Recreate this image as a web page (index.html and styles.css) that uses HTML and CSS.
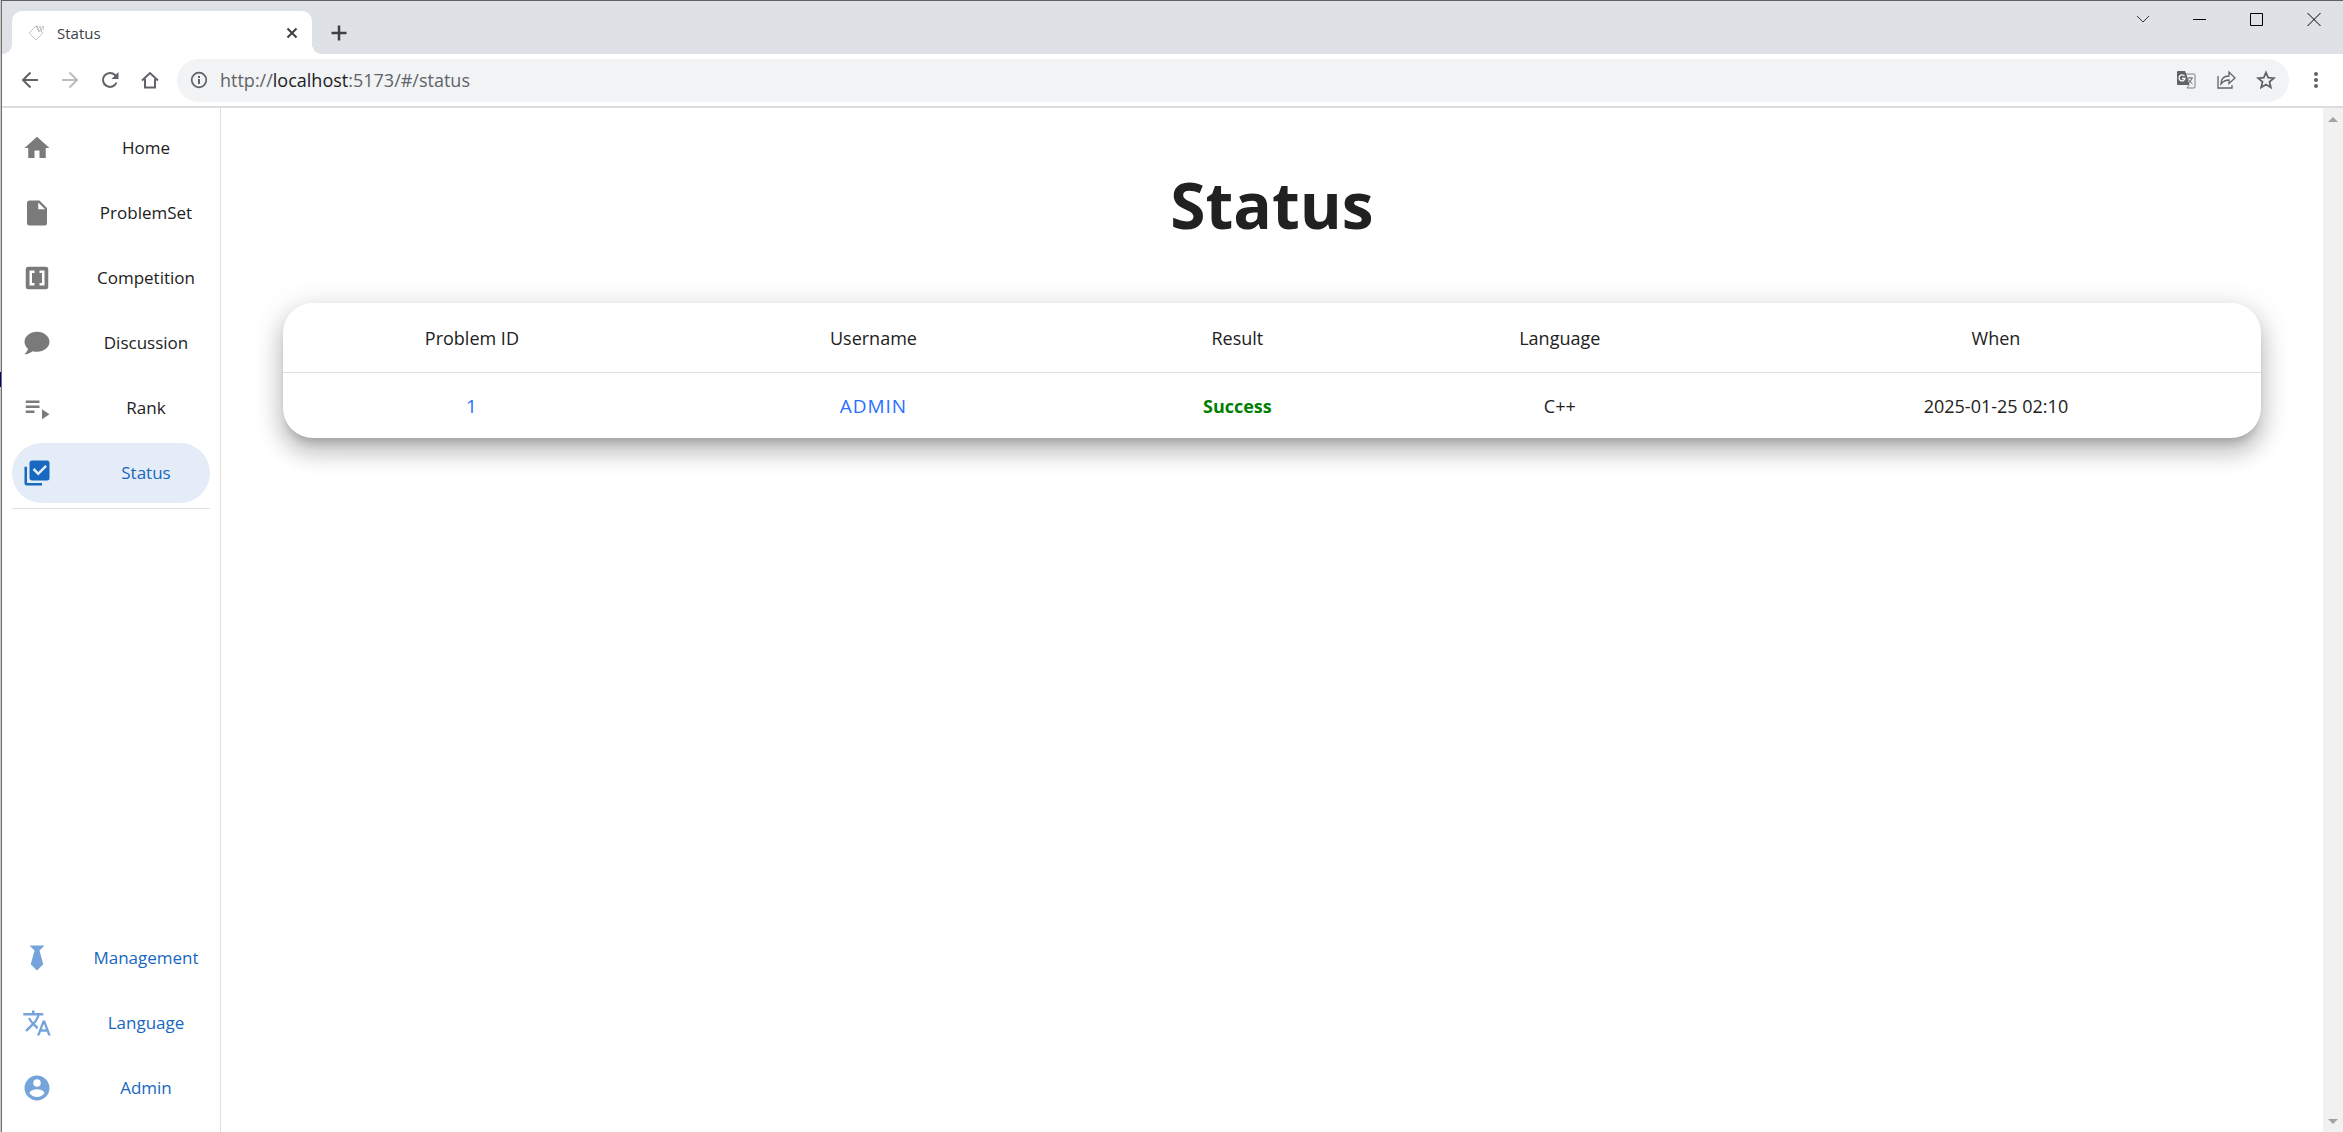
FILE: index.html
```html
<!DOCTYPE html>
<html lang="en">
<head>
<meta charset="utf-8">
<title>Status</title>
<link rel="stylesheet" href="styles.css">
</head>
<body>
<div class="window">
  <header class="tabstrip">
    <div class="tab">
      <svg class="favicon" viewBox="0 0 18 18"><path d="M8 2 1 9l7 7 7-7-3-3M8 2l2 1" fill="none" stroke="#c4c4c4"/><path d="M8 3h9M9 5h7M10 7h4" stroke="#999" stroke-dasharray="2 1" fill="none"/></svg>
      <span class="tab-title">Status</span>
      <button class="tab-close" aria-label="Close tab"><svg viewBox="0 0 12 12"><path d="m1.500 1.500 9 9M10.500 1.500l-9 9" fill="none" stroke="#3c4043" stroke-width="2"/></svg></button>
    </div>
    <button class="new-tab" aria-label="New tab"><svg viewBox="0 0 16 16"><path d="M8 .5v15M.5 8h15" fill="none" stroke="#3c4043" stroke-width="2.500"/></svg></button>
    <div class="window-controls">
      <button aria-label="Search tabs"><svg viewBox="0 0 14 14"><path d="m1 4 6 6 6-6" fill="none" stroke="#333"/></svg></button>
      <button aria-label="Minimize"><svg viewBox="0 0 14 14"><path d="M0 7.500h13" fill="none" stroke="#000"/></svg></button>
      <button aria-label="Maximize"><svg viewBox="0 0 14 14"><path d="M.5 1.500h12v12H.5z" fill="none" stroke="#000"/></svg></button>
      <button aria-label="Close"><svg viewBox="0 0 14 14"><path d="m.5 1 13 13M13.500 1l-13 13" fill="none" stroke="#000"/></svg></button>
    </div>
  </header>

  <div class="toolbar">
    <button class="tool" aria-label="Back"><svg viewBox="0 0 20 20"><path d="M18 10H3m7.500-7.500L3 10l7.500 7.500" fill="none" stroke="#5f6368" stroke-width="2"/></svg></button>
    <button class="tool" aria-label="Forward"><svg viewBox="0 0 20 20"><path d="M2 10h15M9.500 2.500 17 10l-7.500 7.500" fill="none" stroke="#babcbe" stroke-width="2"/></svg></button>
    <button class="tool" aria-label="Reload"><svg viewBox="0 0 20 20"><path d="M16.500 12.500A7 7 0 1 1 15 5l2 2" fill="none" stroke="#5f6368" stroke-width="2"/><path d="M18.500 2v7h-7z" fill="#5f6368"/></svg></button>
    <button class="tool" aria-label="Home page"><svg viewBox="0 0 20 20"><path d="M2 10.500 10 3l8 7.500M5 9v8.500h10V9" fill="none" stroke="#5f6368" stroke-width="2"/></svg></button>
    <div class="address">
      <svg class="info" viewBox="0 0 18 18"><circle cx="9" cy="9" r="7.300" fill="none" stroke="#5f6368" stroke-width="1.700"/><path d="M9 8v5M9 5v2" stroke="#5f6368" stroke-width="2"/></svg>
      <a class="url" href="#/status">http://<span class="host">localhost</span>:5173/#/status</a>
      <button class="tool" aria-label="Translate"><svg viewBox="0 0 20 20"><path d="M2 1h7l1.500 3.500 3 10.500H2a1 1 0 0 1-1-1V2a1 1 0 0 1 1-1z" fill="#5f6368"/><path d="M10.500 4H18q1 0 1 1v12q0 1-1 1h-7l2-3" fill="none" stroke="#7d8084"/><path d="M8.500 6.200A3 3 0 1 0 9 8.500H6" fill="none" stroke="#fff" stroke-width="1.300"/><path d="M11.500 8H17M14 7v1m2 0q-1 4-4 5.500M12.500 9.500q1 2 4 4.500" fill="none" stroke="#5f6368"/></svg></button>
      <button class="tool" aria-label="Share"><svg viewBox="0 0 20 20"><path d="M2 6v12h14v-3" fill="none" stroke="#5f6368" stroke-width="1.300"/><path d="M5 14q0-8 8-8V2l6 6-6 5.500V10q-5 0-8 4z" fill="none" stroke="#5f6368" stroke-width="1.300"/></svg></button>
      <button class="tool" aria-label="Bookmark"><svg viewBox="0 0 20 20"><path d="m10 2.500 2.200 5.200 5.600.5-4.300 3.700 1.300 5.500-4.800-2.900-4.800 2.900 1.300-5.500L2.200 8.200l5.600-.5z" fill="none" stroke="#5f6368" stroke-width="1.800"/></svg></button>
    </div>
    <button class="tool menu" aria-label="Menu"><svg viewBox="0 0 20 20"><g fill="#5f6368"><circle cx="10" cy="4" r="2"/><circle cx="10" cy="10" r="2"/><circle cx="10" cy="16" r="2"/></g></svg></button>
  </div>

  <div class="page">
    <nav class="sidebar">
      <div class="nav-group nav-top">
        <a class="nav-item" href="#/"><svg viewBox="0 0 24 24"><path d="M10,20V14H14V20H19V12H22L12,3L2,12H5V20H10Z"/></svg><span>Home</span></a>
        <a class="nav-item" href="#/problems"><svg viewBox="0 0 24 24"><path d="M13,9V3.500L18.500,9M6,2C4.890,2 4,2.890 4,4V20A2,2 0 0,0 6,22H18A2,2 0 0,0 20,20V8L14,2H6Z"/></svg><span>ProblemSet</span></a>
        <a class="nav-item" href="#/competition"><svg viewBox="0 0 24 24"><path d="M3,5A2,2 0 0,1 5,3H19A2,2 0 0,1 21,5V19A2,2 0 0,1 19,21H5A2,2 0 0,1 3,19V5M6,6V18H10V16H8V8H10V6H6M16,16H14V18H18V6H14V8H16V16Z"/></svg><span>Competition</span></a>
        <a class="nav-item" href="#/discussion"><svg viewBox="0 0 24 24"><path d="M12,3C17.500,3 22,6.580 22,11C22,15.420 17.500,19 12,19C10.760,19 9.570,18.820 8.470,18.500C5.550,21 2,21 2,21C4.330,18.670 4.700,17.100 4.750,16.500C3.050,15.070 2,13.130 2,11C2,6.580 6.500,3 12,3Z"/></svg><span>Discussion</span></a>
        <a class="nav-item" href="#/rank"><svg viewBox="0 0 24 24"><path d="M3,10H14V12H3V10M3,6H14V8H3V6M3,14H10V16H3V14M16,13V21L22,17L16,13Z"/></svg><span>Rank</span></a>
        <a class="nav-item active" href="#/status"><svg viewBox="0 0 24 24"><path d="M22,16A2,2 0 0,1 20,18H8C6.890,18 6,17.100 6,16V4C6,2.890 6.890,2 8,2H20A2,2 0 0,1 22,4V16M16,20V22H4A2,2 0 0,1 2,20V7H4V20H16M13,14L20,7L18.590,5.590L13,11.170L9.910,8.090L8.500,9.500L13,14Z"/></svg><span>Status</span></a>
      </div>
      <div class="nav-group nav-bottom">
        <a class="nav-item" href="#/management"><svg viewBox="0 0 24 24"><path d="M6,2L10,6L7,17L12,22L17,17L14,6L18,2Z"/></svg><span>Management</span></a>
        <a class="nav-item" href="#/language"><svg viewBox="0 0 24 24"><path d="M12.870,15.070L10.330,12.560L10.360,12.530C12.100,10.590 13.340,8.360 14.070,6H17V4H10V2H8V4H1V6H12.170C11.500,7.920 10.440,9.750 9,11.350C8.070,10.320 7.300,9.190 6.690,8H4.690C5.420,9.630 6.420,11.170 7.670,12.560L2.580,17.580L4,19L9,14L12.110,17.110L12.870,15.070M18.500,10H16.500L12,22H14L15.120,19H19.870L21,22H23L18.500,10M15.880,17L17.500,12.670L19.120,17H15.880Z"/></svg><span>Language</span></a>
        <a class="nav-item" href="#/admin"><svg viewBox="0 0 24 24"><path d="M12,19.200C9.500,19.200 7.290,17.920 6,16C6.030,14 10,12.900 12,12.900C14,12.900 17.970,14 18,16C16.710,17.920 14.500,19.200 12,19.200M12,5A3,3 0 0,1 15,8A3,3 0 0,1 12,11A3,3 0 0,1 9,8A3,3 0 0,1 12,5M12,2A10,10 0 0,0 2,12A10,10 0 0,0 12,22A10,10 0 0,0 22,12C22,6.470 17.500,2 12,2Z"/></svg><span>Admin</span></a>
      </div>
    </nav>

    <main class="content">
      <h1>Status</h1>
      <div class="card">
        <table>
          <colgroup><col class="c-id"><col class="c-user"><col class="c-result"><col class="c-lang"><col class="c-when"></colgroup>
          <thead><tr><th>Problem ID</th><th>Username</th><th>Result</th><th>Language</th><th>When</th></tr></thead>
          <tbody><tr><td><a href="#/problem/1">1</a></td><td><a href="#/user/admin">ADMIN</a></td><td class="success">Success</td><td>C++</td><td>2025-01-25 02:10</td></tr></tbody>
        </table>
      </div>
    </main>

    <div class="scrollbar"><i class="arrow up"></i><i class="arrow down"></i></div>
  </div>
</div>
</body>
</html>
```
FILE: styles.css
```css
* { box-sizing: border-box; }

/* The desktop shows as a thin strip left of the window */
body {
  margin: 0;
  padding-left: 1px;
  background: linear-gradient(#c8c8c8 372px, #000080 372px, #000080 387px, #c8c8c8 387px);
  color: #212121;
  font-family: "Open Sans", "Noto Sans", sans-serif;
}

a { color: inherit; text-decoration: none; }

button {
  display: flex;
  align-items: center;
  justify-content: center;
  padding: 0;
  border: 0;
  background: none;
}

svg { display: block; flex: none; }

.window {
  display: flex;
  flex-direction: column;
  min-height: 100vh;
  border-top: 1px solid #606266;
  border-left: 1px solid #707070;
  background: #fff;
}

/* Browser frame */
.tabstrip {
  display: flex;
  align-items: flex-end;
  height: 53px;
  padding-left: 10px;
  background: #dee1e6;
}

.tab {
  position: relative;
  display: flex;
  align-items: center;
  width: 300px;
  height: 43px;
  padding: 0 14px 0 16px;
  border-radius: 10px 10px 0 0;
  background: #fff;
}

.tab::before,
.tab::after {
  content: "";
  position: absolute;
  bottom: 0;
  width: 10px;
  height: 10px;
}

.tab::before { right: 100%; background: radial-gradient(circle at 0 0, #dee1e6 10px, #fff 10px); }
.tab::after { left: 100%; background: radial-gradient(circle at 100% 0, #dee1e6 10px, #fff 10px); }

.favicon { width: 18px; height: 18px; }
.tab-title { flex: 1; margin-left: 11px; color: #3c4043; font-size: 15px; }
.tab-close svg { width: 12px; height: 12px; }
.new-tab { width: 54px; height: 43px; }
.new-tab svg { width: 16px; height: 16px; }

.window-controls { display: flex; align-self: flex-start; margin-left: auto; padding-right: 1px; }
.window-controls button { width: 57px; height: 36px; }
.window-controls svg { width: 14px; height: 14px; }

.toolbar {
  display: flex;
  align-items: center;
  height: 54px;
  padding: 0 7px 0 8px;
  border-bottom: 2px solid #dadcde;
}

.tool { width: 40px; height: 40px; }
.tool svg { width: 20px; height: 20px; }
.menu { margin-left: 7px; }

.address {
  display: flex;
  flex: 1;
  align-items: center;
  height: 43px;
  margin-left: 7px;
  padding: 0 3px 0 13px;
  border-radius: 22px;
  background: #f1f3f4;
}

.info { width: 18px; height: 18px; }
.url { flex: 1; margin-left: 12px; color: #5f6368; font-size: 18px; }
.host { color: #202124; }

/* Page */
.page { display: flex; flex: 1; }

.sidebar {
  display: flex;
  flex-direction: column;
  justify-content: space-between;
  width: 219px;
  padding: 10px 10px 14px;
  border-right: 1px solid #e0e0e0;
}

.nav-group { display: flex; flex-direction: column; gap: 5px; }
.nav-top { padding-bottom: 5px; border-bottom: 1px solid #e0e0e0; }

.nav-item {
  display: flex;
  align-items: center;
  gap: 30px;
  height: 60px;
  padding: 0 0 0 10px;
  border-radius: 30px;
  font-size: 17px;
}

.nav-item svg { width: 30px; height: 30px; fill: #7a7a7a; }
.nav-item span { flex: 1; padding-bottom: 2px; text-align: center; }
.nav-item.active { background: #e4ecf7; color: #1867c0; }
.nav-item.active svg { fill: #1867c0; }
.nav-bottom { color: #1867c0; }
.nav-bottom svg { fill: #74a4d9; }

.content { flex: 1; padding: 0 62px; }

h1 {
  margin: 49px 0 50px;
  font-size: 64px;
  line-height: 96px;
  text-align: center;
}

.card {
  overflow: hidden;
  border-radius: 30px;
  background: #fff;
  box-shadow:
    0 9px 10px -5px rgba(0, 0, 0, .2),
    0 15px 21px 3px rgba(0, 0, 0, .14),
    0 6px 28px 5px rgba(0, 0, 0, .12);
}

table { width: 100%; border-spacing: 0; table-layout: fixed; font-size: 18px; }
th, td { padding: 0; text-align: center; font-weight: 400; }
th { height: 70px; border-bottom: 1px solid #e0e0e0; }
td { height: 65px; }
td a { color: #2a70ff; font-size: 19px; letter-spacing: 1px; }
td.success { color: green; font-weight: 700; }
.c-id { width: 19.1%; }
.c-user { width: 21.5%; }
.c-result { width: 15.3%; }
.c-lang { width: 17.3%; }
.c-when { width: 26.8%; }

.scrollbar {
  display: flex;
  flex-direction: column;
  align-items: center;
  justify-content: space-between;
  width: 20px;
  padding: 9px 0 8px;
  background: #f1f1f1;
}

.arrow { border: 5px solid transparent; }
.arrow.up { border-top: 0; border-bottom-color: #a3a3a3; }
.arrow.down { border-bottom: 0; border-top-color: #a3a3a3; }
```
